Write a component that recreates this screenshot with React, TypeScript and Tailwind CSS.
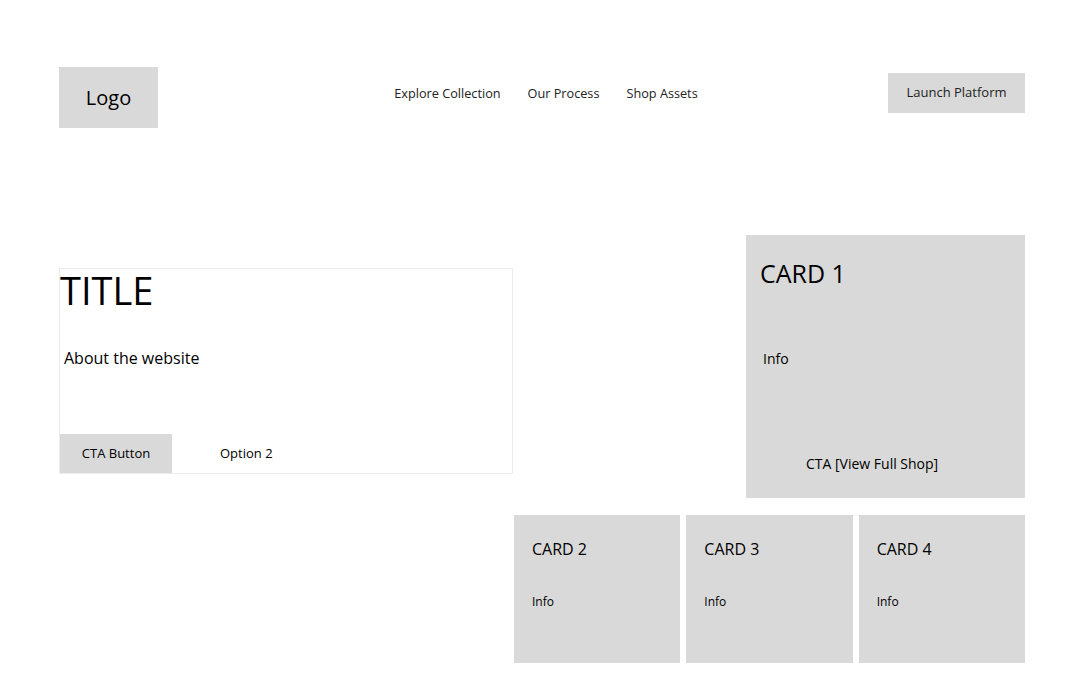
export default function App() {
  const font = { fontFamily: '"Open Sans", "Noto Sans", sans-serif' };
  const small = ["CARD 2", "CARD 3", "CARD 4"];
  return (
    <div className="min-h-[700px] w-full bg-white text-black" style={font}>
      <div className="ml-[59px] mr-[61px] pt-[67px]">
        {/* header */}
        <header className="grid grid-cols-[1fr_auto_1fr] items-start">
          <div className="flex h-[61px] w-[99px] items-center justify-center bg-[#d9d9d9] text-[20px]">
            Logo
          </div>
          <nav className="ml-[8px] mt-[17px] flex gap-[27px] text-[12.7px] text-[#222]">
            <a>Explore Collection</a>
            <a>Our Process</a>
            <a>Shop Assets</a>
          </nav>
          <div className="flex justify-end pt-[6px]">
            <button className="h-[40px] w-[137px] bg-[#d9d9d9] text-[13px] text-[#222]">
              Launch Platform
            </button>
          </div>
        </header>

        {/* main */}
        <main className="mt-[107px] flex flex-col">
          <div className="flex items-start justify-between">
            <section className="mt-[33px] flex h-[206px] w-[454px] flex-col border border-[#ececec]">
              <h1 className="-mt-[3px] text-[38px] leading-[48px]">TITLE</h1>
              <p className="ml-[4px] mt-[32px] text-[16px]">About the website</p>
              <div className="mt-auto flex items-center">
                <button className="h-[39px] w-[112px] bg-[#d9d9d9] text-[13px]">CTA Button</button>
                <button className="ml-[48px] text-[13px]">Option 2</button>
              </div>
            </section>
            <article className="flex h-[263px] w-[279px] flex-col bg-[#d9d9d9]">
              <h2 className="ml-[14px] mt-[22px] text-[25px] leading-[32px]">CARD 1</h2>
              <p className="ml-[17px] mt-[59px] text-[14px]">Info</p>
              <p className="ml-[60px] mt-auto mb-[24px] text-[14px]">CTA [View Full Shop]</p>
            </article>
          </div>
          <div className="ml-auto mt-[17px] grid h-[148px] w-[511px] grid-cols-3 gap-[6px]">
            {small.map((t) => (
              <article key={t} className="flex flex-col bg-[#d9d9d9] px-[18px]">
                <h3 className="mt-[23px] text-[16px] leading-[22px]">{t}</h3>
                <p className="mt-[33px] text-[12px]">Info</p>
              </article>
            ))}
          </div>
        </main>
      </div>
    </div>
  );
}
